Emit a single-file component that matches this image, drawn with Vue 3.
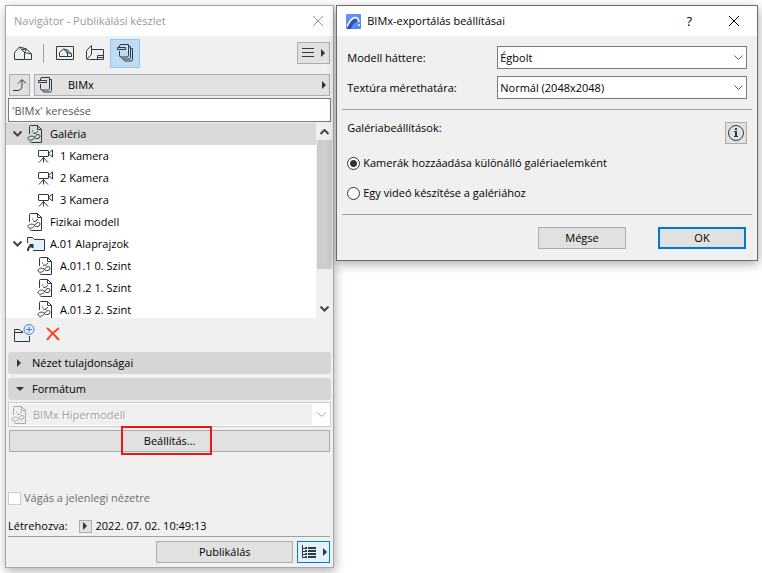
<script setup>
import { ref } from 'vue'

const search = ref('')
const background = ref('Égbolt')
const textureSize = ref('Normál (2048x2048)')
const galleryMode = ref('separate')
const format = ref('BIMx Hipermodell')
const crop = ref(false)

const rows = [
  { text: 'Galéria', icon: 'doc', level: 0, open: true, selected: true },
  { text: '1 Kamera', icon: 'camera', level: 1 },
  { text: '2 Kamera', icon: 'camera', level: 1 },
  { text: '3 Kamera', icon: 'camera', level: 1 },
  { text: 'Fizikai modell', icon: 'doc', level: 0 },
  { text: 'A.01 Alaprajzok', icon: 'folder', level: 0, open: true },
  { text: 'A.01.1 0. Szint', icon: 'doc', level: 1 },
  { text: 'A.01.2 1. Szint', icon: 'doc', level: 1 },
  { text: 'A.01.3 2. Szint', icon: 'doc', level: 1 }
]

const docPath = 'M2.500 10V2.500q0-1 1-1h7l4 4v13h-10q-1.500 0-1.500-1M10.500 1.500v4h4M5.500 6.500v1M6 9q2 1 4-.5M10.500 7v1M7 13c-1.500-1.500-6-1-6 1.500s4.500 2 6 0c1-2 2-4 4.500-4 2 0 2 3.500-.5 4-2 .5-3-.500-4-1.500'
const cameraPath = 'M2 2.500h9q.5 0 .5.500v5q0 .5-.5.500H2q-.5 0-.5-.500V3q0-.5.500-.500zM11.500 5.500l4-3.500v7zM6.500 8.500v6M6.500 9.500l-4.500 5M6.500 9.500l4.500 5'
</script>

<template>
  <main class="desktop">
    <section class="window navigator">
      <header class="title-bar">
        <h1>Navigátor - Publikálási készlet</h1>
        <button type="button" class="plain-btn" aria-label="Bezárás">
          <svg width="12" height="12" viewBox="0 0 12 12"><path d="M1 1l10 10M11 1L1 11" /></svg>
        </button>
      </header>

      <nav class="toolbar">
        <button type="button" class="tool-btn" aria-label="Projekt">
          <svg width="20" height="18" viewBox="0 0 20 18">
            <path d="M1.500 15.500V8.500l5-5.500 5 5.500v7zM6.500 3l7 2 5 5v5.500h-7M13.500 5l-2 3.500 7 1.500M13.500 5L9 5.500" />
          </svg>
        </button>
        <span class="divider"></span>
        <button type="button" class="tool-btn" aria-label="Nézetek">
          <svg width="20" height="18" viewBox="0 0 20 18">
            <path d="M1.500 2.500h17v13h-17zM4.500 12.500V8.500l4-3.500 4 4v3.500zM8.500 5l4 1 4 4v2.500h-4M12.500 6l-1 2.500 4.500 1" />
          </svg>
        </button>
        <button type="button" class="tool-btn" aria-label="Tervlapok">
          <svg width="20" height="18" viewBox="0 0 20 18">
            <path d="M6.500 5.500v-4l-5 5v8q0 1 1 1h2M2 15l4.500-4.500v-5M4.500 15.500h14v-10h-12M12.500 15.500v-4h6M12.500 13.500h6" />
          </svg>
        </button>
        <button type="button" class="tool-btn active" aria-label="Publikálási készletek">
          <svg width="20" height="20" viewBox="0 0 20 20">
            <path d="M4.500 4V3q0-1.500 1.500-1.500h7.500v11q0 1.500-1.500 1.500H6q-1.500 0-1.500-1.500V8M2.500 4.500h8v2h-8zM13.500 3.500h2v11q0 1.500-1.500 1.500H8q-1 0-1.500-1.500M15.500 5.500h2v11q0 1.500-1.500 1.500h-6q-1 0-1.500-1.500" />
          </svg>
        </button>
        <button type="button" class="gray-btn menu-btn" aria-label="Menü">
          <svg width="12" height="10" viewBox="0 0 12 10"><path d="M0 .5h12M0 4.500h12M0 8.500h12" /></svg>
          <i class="arrow"></i>
        </button>
      </nav>

      <div class="path-row">
        <button type="button" class="gray-btn up-btn" aria-label="Fel">
          <svg width="16" height="14" viewBox="0 0 16 14">
            <path d="M1 12.500h4q5 0 5-5V2M6 5.500l4-4 4 4" />
          </svg>
        </button>
        <button type="button" class="gray-btn set-btn">
          <svg width="16" height="18" viewBox="0 0 16 18">
            <path d="M3.500 4.500V3q0-1.500 1.500-1.500h7.500v11q0 1.500-1.500 1.500H5q-1.500 0-1.500-1.500V8M1.500 4.500h8v2h-8zM12.500 3.500h2v11q0 1.500-1.500 1.500H7q-1 0-1.500-1.500" />
          </svg>
          <span>BIMx</span>
          <i class="arrow"></i>
        </button>
      </div>

      <input v-model="search" class="search" type="text" placeholder="'BIMx' keresése" aria-label="Keresés" />

      <div class="tree">
        <ul>
          <li v-for="row in rows" :key="row.text" :class="{ selected: row.selected, child: row.level }">
            <span class="twist">
              <svg v-if="row.open" width="9" height="6" viewBox="0 0 9 6"><path d="M.5 .5l4 4 4-4" /></svg>
            </span>
            <svg v-if="row.icon === 'doc'" class="row-icon" width="18" height="20" viewBox="0 0 18 20">
              <path :d="docPath" />
            </svg>
            <svg v-else-if="row.icon === 'camera'" class="row-icon" width="18" height="16" viewBox="0 0 18 16">
              <path :d="cameraPath" />
            </svg>
            <svg v-else class="row-icon" width="18" height="18" viewBox="0 0 18 18">
              <path class="folder" d="M.5 8V2.500h5l2 2h10v11H6" />
              <path class="shortcut" d="M1 16q0-5 4-5M2.500 10h3v3" />
            </svg>
            <span>{{ row.text }}</span>
          </li>
        </ul>
        <div class="scrollbar">
          <svg width="9" height="6" viewBox="0 0 9 6"><path d="M.5 5l4-4 4 4" /></svg>
          <span class="thumb"></span>
          <svg width="9" height="6" viewBox="0 0 9 6"><path d="M.5 .5l4 4 4-4" /></svg>
        </div>
      </div>

      <div class="actions">
        <button type="button" class="plain-btn" aria-label="Új mappa">
          <svg width="21" height="20" viewBox="0 0 21 20">
            <path d="M9 7.500H7.500l-2-2h-5v12h15V12M.5 8.500H9" />
            <circle class="plus" cx="15" cy="5.500" r="5" />
            <path class="plus" d="M12 5.500h6M15 2.500v6" />
          </svg>
        </button>
        <button type="button" class="plain-btn" aria-label="Törlés">
          <svg width="14" height="14" viewBox="0 0 14 14"><path class="delete" d="M1 1q6 5 12 12M13 1Q6 6 1 13" /></svg>
        </button>
      </div>

      <div class="panels">
        <button type="button" class="panel-head"><i class="arrow"></i>Nézet tulajdonságai</button>
        <button type="button" class="panel-head"><i class="arrow down"></i>Formátum</button>

        <div class="format">
          <svg class="row-icon" width="18" height="20" viewBox="0 0 18 20"><path :d="docPath" /></svg>
          <select v-model="format" disabled aria-label="Formátum">
            <option>BIMx Hipermodell</option>
          </select>
          <span class="drop">
            <svg width="9" height="6" viewBox="0 0 9 6"><path d="M.5 .5l4 4 4-4" /></svg>
          </span>
        </div>

        <div class="settings-wrap">
          <button type="button" class="gray-btn settings-btn">Beállítás...</button>
          <span class="highlight"></span>
        </div>
      </div>

      <label class="crop">
        <input v-model="crop" type="checkbox" disabled />
        <span>Vágás a jelenlegi nézetre</span>
      </label>

      <div class="created">
        <span>Létrehozva:</span>
        <button type="button" class="gray-btn mini-btn" aria-label="Dátum"><i class="arrow"></i></button>
        <span>2022. 07. 02. 10:49:13</span>
      </div>

      <footer class="publish">
        <button type="button" class="gray-btn publish-btn">Publikálás</button>
        <button type="button" class="gray-btn list-btn" aria-label="Lista">
          <svg width="15" height="14" viewBox="0 0 15 14">
            <path d="M1.500 0v13M1.500 3.500h3M1.500 6.500h3M1.500 9.500h3M1.500 12.500h3" />
            <path class="bars" d="M4 3h2M7 3h8M4 6h2M7 6h8M4 9h2M7 9h8M4 12h2M7 12h8" />
          </svg>
          <i class="arrow"></i>
        </button>
      </footer>
    </section>

    <section class="window dialog">
      <header class="title-bar">
        <svg class="logo" width="15" height="15" viewBox="0 0 15 15">
          <defs>
            <linearGradient id="logo-fill" x1="0" y1="0" x2="1" y2="1">
              <stop offset="0" stop-color="#6c93f5" />
              <stop offset="1" stop-color="#4f82f2" />
            </linearGradient>
          </defs>
          <rect width="15" height="15" rx="1" fill="url(#logo-fill)" />
          <path class="logo-shade" d="M1 15Q3 7 9 4.500L12 7q-5 1-7 8z" />
          <path class="logo-arc" d="M1 12.500C3.500 7 6.500 3.500 9.500 3.500c2 0 3 2 3.500 4.500" />
          <circle cx="13" cy="11" r="1" fill="#fff" />
        </svg>
        <h2>BIMx-exportálás beállításai</h2>
        <button type="button" class="plain-btn help-btn">?</button>
        <button type="button" class="plain-btn" aria-label="Bezárás">
          <svg width="12" height="12" viewBox="0 0 12 12"><path d="M1 1l10 10M11 1L1 11" /></svg>
        </button>
      </header>

      <div class="fields">
        <label for="background">Modell háttere:</label>
        <div class="combo">
          <select id="background" v-model="background">
            <option>Égbolt</option>
          </select>
          <svg width="9" height="6" viewBox="0 0 9 6"><path d="M.5 .5l4 4 4-4" /></svg>
        </div>
        <label for="texture">Textúra mérethatára:</label>
        <div class="combo">
          <select id="texture" v-model="textureSize">
            <option>Normál (2048x2048)</option>
          </select>
          <svg width="9" height="6" viewBox="0 0 9 6"><path d="M.5 .5l4 4 4-4" /></svg>
        </div>
      </div>

      <div class="gallery">
        <div class="gallery-head">
          <span>Galériabeállítások:</span>
          <button type="button" class="gray-btn info-btn" aria-label="Információ">
            <svg width="18" height="18" viewBox="0 0 18 18">
              <circle cx="9" cy="9" r="7.500" />
              <path class="info-mark" d="M9 4v2M9 7v6" />
              <path d="M7 7.500h2M7 12.500h4" />
            </svg>
          </button>
        </div>
        <label class="radio">
          <input v-model="galleryMode" type="radio" name="gallery" value="separate" />
          <span>Kamerák hozzáadása különálló galériaelemként</span>
        </label>
        <label class="radio">
          <input v-model="galleryMode" type="radio" name="gallery" value="video" />
          <span>Egy videó készítése a galériához</span>
        </label>
      </div>

      <footer class="dialog-actions">
        <button type="button" class="gray-btn">Mégse</button>
        <button type="button" class="gray-btn primary">OK</button>
      </footer>
    </section>
  </main>
</template>

<style>
body {
  background: #fff;
}
</style>

<style scoped>
* {
  box-sizing: border-box;
}

.desktop {
  display: flex;
  align-items: flex-start;
  gap: 2px;
  padding: 5px 4px 5px 5px;
  font: 11px/16px "Open Sans", "Noto Sans", sans-serif;
  color: #000;
}

button,
input,
select {
  font: inherit;
  color: inherit;
  margin: 0;
}

svg {
  display: block;
  flex: none;
  fill: none;
  stroke: #2b3b44;
  stroke-width: 1;
}

.window {
  min-width: 0;
  background: #f0f0f0;
  border: 1px solid #a6a6a6;
  box-shadow: 1px 3px 10px rgba(0, 0, 0, 0.32);
}

.navigator {
  flex: 329 1 0;
}

.dialog {
  flex: 422 1 0;
  border-color: #6b6b6b;
}

.title-bar {
  display: flex;
  align-items: center;
  height: 30px;
  padding: 0 9px 0 8px;
  background: #fff;
}

.title-bar h1,
.title-bar h2 {
  flex: 1;
  margin: 0;
  font-size: 11px;
  font-weight: 400;
}

.navigator .title-bar h1 {
  color: #999;
}

.navigator .title-bar svg {
  stroke: #999;
}

.dialog .title-bar {
  padding-right: 17px;
}

.dialog .title-bar svg {
  stroke: #000;
}

.dialog .title-bar .logo {
  stroke: none;
  margin: 0 6px 0 1px;
}

.logo .logo-shade {
  fill: #2c55b0;
}

.logo .logo-arc {
  stroke: #fff;
  stroke-width: 1.5;
}

.plain-btn {
  display: grid;
  place-items: center;
  padding: 0;
  border: 0;
  background: none;
}

.help-btn {
  margin-right: 36px;
  font-size: 13px;
}

.gray-btn {
  display: flex;
  align-items: center;
  justify-content: center;
  height: 22px;
  padding: 0;
  border: 1px solid #adadad;
  background: #e1e1e1;
}

.arrow {
  border: 4px solid transparent;
  border-left-color: #333;
  border-right: 0;
}

.arrow.down {
  border: 4px solid transparent;
  border-top-color: #333;
  border-bottom: 0;
}

.toolbar {
  display: flex;
  align-items: center;
  height: 34px;
  padding: 0 3px 0 2px;
}

.tool-btn {
  display: grid;
  place-items: center;
  width: 30px;
  height: 29px;
  padding: 0;
  border: 1px solid transparent;
  background: none;
}

.tool-btn.active {
  border-color: #90c8f6;
  background: #c0dcf3;
}

.divider {
  width: 1px;
  height: 19px;
  margin: 0 6px 0 5px;
  background: #a0a0a0;
}

.menu-btn {
  width: 33px;
  margin-left: auto;
  gap: 7px;
}

.path-row {
  display: flex;
  gap: 4px;
  padding: 4px 3px 2px;
}

.up-btn {
  width: 21px;
}

.set-btn {
  flex: 1;
  padding: 0 3px 0 2px;
}

.set-btn span {
  flex: 1;
  padding-left: 15px;
  text-align: left;
}

.search {
  display: block;
  width: calc(100% - 4px);
  height: 24px;
  margin: 0 2px 1px;
  padding: 0 3px;
  border: 1px solid #7a7a7a;
  background: #fff;
}

.search::placeholder {
  color: #555;
  opacity: 1;
}

.tree {
  display: flex;
  height: 195px;
  background: #fff;
}

.tree ul {
  flex: 1;
  margin: 0;
  padding: 0;
  overflow: hidden;
  list-style: none;
}

.tree li {
  display: flex;
  align-items: center;
  height: 22px;
  padding-left: 7px;
}

.tree li.child {
  padding-left: 17px;
}

.tree li.selected {
  background: #d9d9d9;
}

.twist {
  width: 14px;
}

.twist svg,
.scrollbar svg {
  stroke: #444;
  stroke-width: 2;
}

.row-icon {
  margin-right: 5px;
}

.row-icon .folder {
  fill: #e3f1fc;
}

.row-icon .shortcut {
  stroke-width: 2;
}

.scrollbar {
  display: flex;
  flex-direction: column;
  align-items: center;
  width: 17px;
  padding: 6px 0;
  background: #f0f0f0;
}

.thumb {
  width: 15px;
  height: 129px;
  margin: 5px 0 auto;
  background: #cdcdcd;
}

.actions {
  display: flex;
  align-items: center;
  gap: 11px;
  height: 34px;
  padding: 0 8px 2px;
}

.actions .plus {
  stroke: #2f7df0;
}

.actions .delete {
  stroke: #fa4616;
  stroke-width: 2;
}

.panels {
  padding: 0 2px;
}

.panel-head {
  display: flex;
  align-items: center;
  width: 100%;
  height: 22px;
  margin-bottom: 4px;
  padding: 0 9px;
  border: 0;
  border-radius: 3px;
  background: #d6d6d6;
}

.panel-head .arrow {
  margin-right: 11px;
}

.panel-head .arrow.down {
  margin: 0 8px 0 -1px;
}

.format {
  display: flex;
  align-items: center;
  height: 25px;
  margin: -2px 0 3px;
  border: 1px solid #ccc;
  padding-left: 2px;
  box-shadow: inset 0 0 0 1px #fff;
}

.format .row-icon {
  margin-right: 4px;
}

.format svg {
  stroke: #aaa;
}

.format select {
  flex: 1;
  min-width: 0;
  padding: 0;
  border: 0;
  appearance: none;
  background: none;
  color: #a0a0a0;
  opacity: 1;
  text-shadow: 1px 1px #fff;
}

.drop {
  display: grid;
  place-items: center;
  width: 18px;
  height: 100%;
  background: #fff;
}

.settings-wrap {
  position: relative;
  padding: 0 1px;
}

.settings-btn {
  width: 100%;
}

.highlight {
  position: absolute;
  inset: -4px 37% -3px 35%;
  border: 2px solid #f01414;
  pointer-events: none;
}

.crop {
  display: flex;
  align-items: center;
  gap: 3px;
  margin-top: 38px;
  padding: 0 2px;
  color: #6d6d6d;
}

.crop input {
  appearance: none;
  width: 13px;
  height: 13px;
  border: 1px solid #ccc;
  background: #fff;
}

.created {
  display: flex;
  align-items: center;
  margin: 12px 3px 0 2px;
  padding-bottom: 2px;
  border-bottom: 1px solid #a0a0a0;
}

.mini-btn {
  width: 13px;
  height: 13px;
  margin: 0 4px 0 11px;
}

.publish {
  display: flex;
  justify-content: flex-end;
  gap: 4px;
  padding: 4px 3px;
}

.publish-btn {
  width: 137px;
}

.list-btn {
  width: 33px;
  gap: 7px;
  border-color: #0078d7;
  background: #e5f1fb;
}

.list-btn .bars {
  stroke-width: 2;
}

.fields {
  display: grid;
  grid-template-columns: 150px 1fr;
  align-items: center;
  row-gap: 7px;
  margin: 0 5px;
  padding: 10px 5px 10px;
  border-bottom: 1px solid #a0a0a0;
}

.combo {
  display: grid;
  align-items: center;
}

.combo > * {
  grid-area: 1 / 1;
}

.combo select {
  width: 100%;
  height: 23px;
  padding: 0 20px 0 2px;
  border: 1px solid #7a7a7a;
  border-radius: 0;
  appearance: none;
  background: #fff;
}

.combo svg {
  justify-self: end;
  margin-right: 4px;
  stroke: #555;
  pointer-events: none;
}

.gallery {
  margin: 0 5px;
  padding: 12px 5px 13px;
  border-bottom: 1px solid #a0a0a0;
}

.gallery-head {
  display: flex;
  justify-content: space-between;
  margin-bottom: 11px;
  line-height: 12px;
}

.info-btn {
  width: 22px;
}

.info-mark {
  stroke-width: 2;
}

.radio {
  display: flex;
  align-items: center;
  gap: 3px;
}

.radio + .radio {
  margin-top: 14px;
}

.radio input {
  appearance: none;
  width: 13px;
  height: 13px;
  border: 1px solid #333;
  border-radius: 50%;
  background: #fff;
}

.radio input:checked {
  background: radial-gradient(circle, #333 0 3px, #fff 4px);
}

.dialog-actions {
  display: flex;
  justify-content: flex-end;
  gap: 32px;
  padding: 12px 11px 11px;
}

.dialog-actions .gray-btn {
  width: 88px;
}

.dialog-actions .primary {
  border: 2px solid #0078d7;
}
</style>
